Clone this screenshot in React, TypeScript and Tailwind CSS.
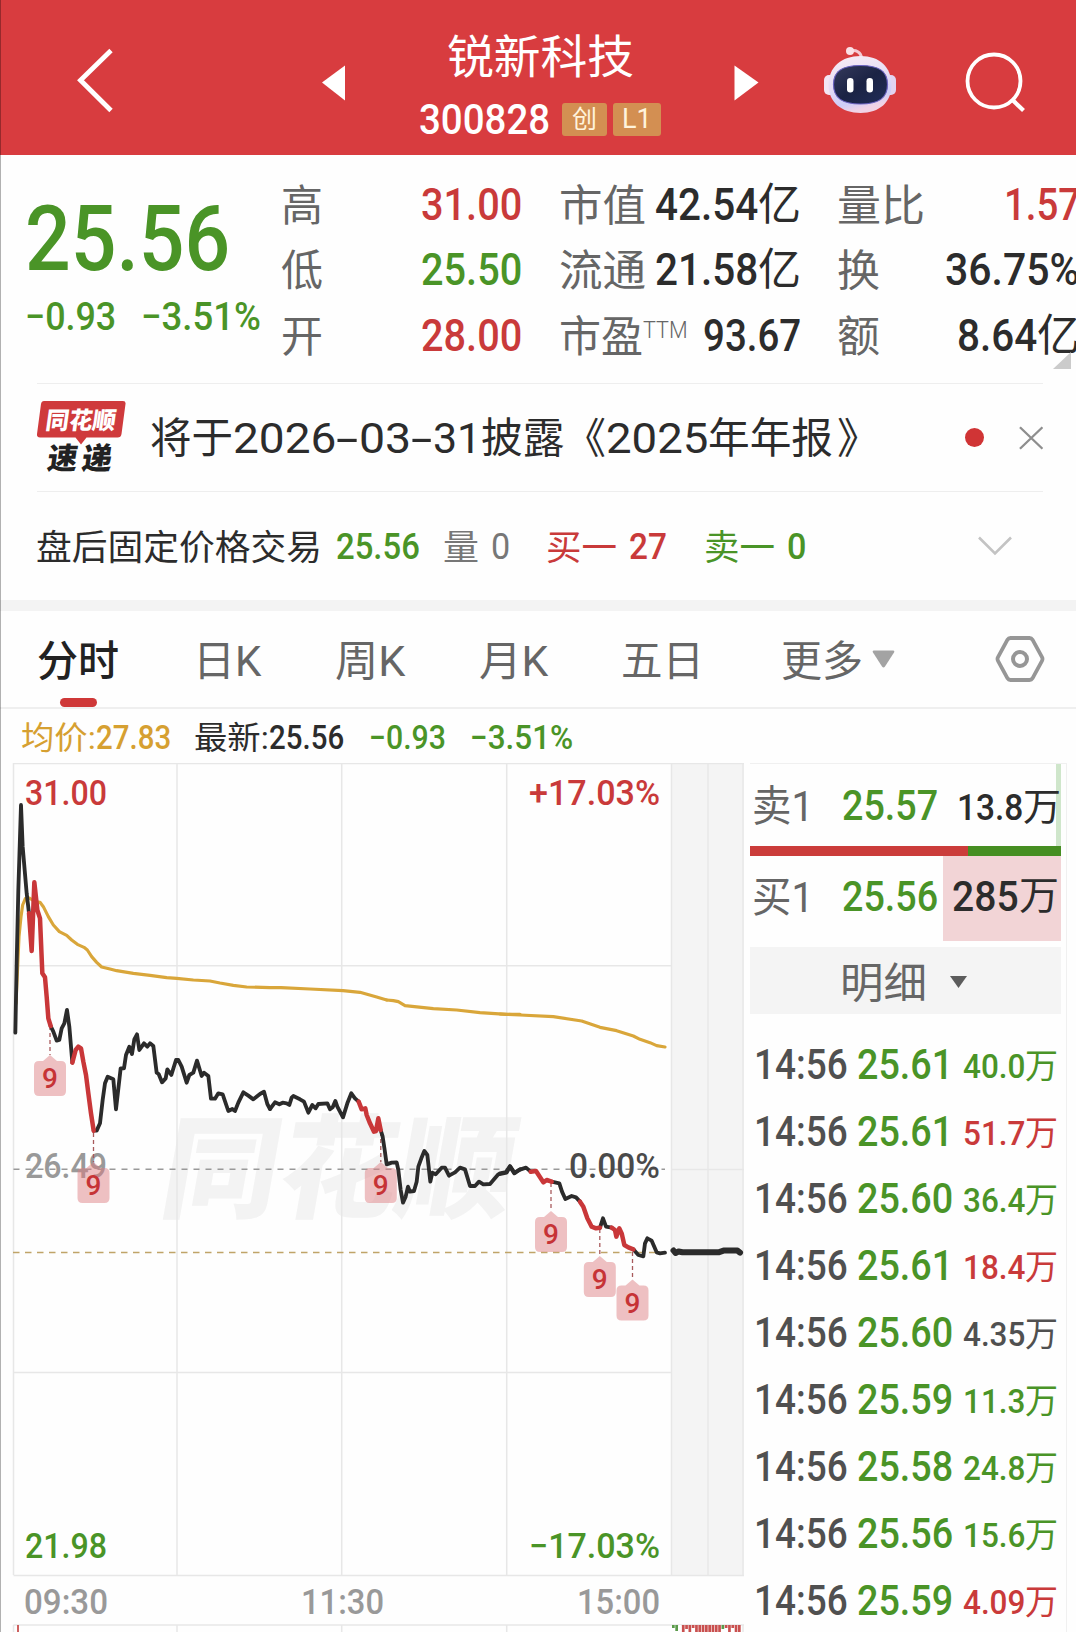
import { useLayoutEffect, useRef, type ReactNode } from "react";

const RED = "#c93a3a";
const GREEN = "#4a9427";

/** Single-line text squeezed or stretched to the width of its box. */
function Fit({ className = "", children }: { className?: string; children: ReactNode }) {
  const box = useRef<HTMLSpanElement>(null);
  const inner = useRef<HTMLSpanElement>(null);
  useLayoutEffect(() => {
    const fit = () => {
      if (!box.current || !inner.current) return;
      const natural = inner.current.offsetWidth;
      if (natural) inner.current.style.transform = `scaleX(${box.current.clientWidth / natural})`;
    };
    fit();
    document.fonts?.ready.then(fit);
  }, []);
  return (
    <span ref={box} className={`block shrink-0 leading-none ${className}`}>
      <span ref={inner} className="inline-block origin-left whitespace-nowrap align-top">
        {children}
      </span>
    </span>
  );
}

function Robot() {
  return (
    <svg className="ml-[64px] w-[74px] h-[70px] shrink-0" viewBox="823 45 74 70">
      <defs>
        <linearGradient id="shell" x1="0" y1="0" x2="0.3" y2="1">
          <stop offset="0" stopColor="#f9edf5" />
          <stop offset="0.55" stopColor="#e6dcf4" />
          <stop offset="0.85" stopColor="#cdcdf8" />
          <stop offset="1" stopColor="#f0d3e6" />
        </linearGradient>
        <linearGradient id="visor" x1="0" y1="0" x2="1" y2="1">
          <stop offset="0" stopColor="#353a5c" />
          <stop offset="0.5" stopColor="#1b2344" />
          <stop offset="1" stopColor="#202c58" />
        </linearGradient>
      </defs>
      <path d="M850 51c6-1.500 11 1 11.500 7" fill="none" stroke="#f5c9d3" strokeWidth="3" />
      <circle cx="850" cy="51" r="4" fill="#fbe0e6" />
      <rect x="824" y="75" width="12" height="20" rx="5" fill="#f3e6f4" />
      <rect x="884" y="75" width="12" height="20" rx="5" fill="#e2d3f0" />
      <path d="M860.500 56c19 0 31 11 31 29 0 17-12 28-31 28s-32-11-32-28c0-18 13-29 32-29Z" fill="url(#shell)" />
      <path
        d="M860.500 65.500c19 0 27 6 27 19s-8 19.500-27 19.500-27-6.500-27-19.500 8-19 27-19Z"
        fill="url(#visor)"
        stroke="#6a62c0"
        strokeWidth="1.200"
      />
      <rect x="847" y="78" width="6.500" height="14.500" rx="3.200" fill="#fff" />
      <rect x="866.500" y="78" width="6.500" height="14.500" rx="3.200" fill="#fff" />
    </svg>
  );
}

function Header() {
  return (
    <header className="flex h-[155px] shrink-0 bg-[#d83c3f] text-white">
      <svg className="ml-[76px] w-[40px] h-[155px] shrink-0" viewBox="76 0 40 155">
        <path d="M111 50.500 80.500 80.200 111 110.500" fill="none" stroke="#fff" strokeWidth="4.800" />
      </svg>
      <svg className="ml-[206px] w-[23px] h-[155px] shrink-0" viewBox="322 0 23 155">
        <path d="M345 65.500v35L322 82.500Z" fill="#fff" />
      </svg>
      <div className="ml-[74px] flex w-[243px] shrink-0 flex-col items-center pt-[34px]">
        <Fit className="w-[187px] text-[46px]">锐新科技</Fit>
        <div className="mt-[18px] flex h-[42px] w-full items-center">
          <Fit className="w-[131px] pt-[1px] text-[42px] font-medium">300828</Fit>
          <span className="ml-[12px] flex h-[33px] w-[45px] items-center justify-center rounded-[3px] bg-[#d38f52] text-[#fff3dc]">
            <Fit className="w-[25px] text-[25px]">创</Fit>
          </span>
          <span className="ml-[6px] flex h-[33px] w-[48px] items-center justify-center rounded-[3px] bg-[#d38f52] text-[#fff3dc]">
            <Fit className="w-[30px] text-[27px]">L1</Fit>
          </span>
        </div>
      </div>
      <svg className="ml-[72px] w-[25px] h-[155px] shrink-0" viewBox="734 0 25 155">
        <path d="M734.500 65.500v35L758.500 82.500Z" fill="#fff" />
      </svg>
      <div className="flex pt-[45px]">
        <Robot />
      </div>
      <svg className="ml-[67px] w-[62px] h-[155px] shrink-0" viewBox="964 0 62 155">
        <ellipse cx="994" cy="81" rx="26.500" ry="26.500" fill="none" stroke="#fff" strokeWidth="3.800" />
        <path d="m1011.500 99 12 11.500" stroke="#fff" strokeWidth="4.200" />
      </svg>
    </header>
  );
}

function StatRow({ children }: { children: ReactNode }) {
  return <div className="flex h-[65.5px] items-center justify-between text-[44px]">{children}</div>;
}

function Stats() {
  return (
    <section className="relative flex h-[228px] shrink-0 text-[#2c2c2c]">
      <div className="ml-[25px] w-[256px] shrink-0 pt-[39px] text-[#4a9427]">
        <Fit className="w-[205px] text-[91px] font-medium">25.56</Fit>
        <div className="mt-[13px] flex text-[39px] font-medium">
          <Fit className="w-[91px]">−0.93</Fit>
          <Fit className="ml-[25px] w-[120px]">−3.51%</Fit>
        </div>
      </div>
      <div className="w-[241px] shrink-0 pt-[17px]">
        <StatRow>
          <Fit className="w-[42px] pt-[3px] text-[43px] text-[#666]">高</Fit>
          <Fit className="w-[101px] font-medium text-[#c93a3a]">31.00</Fit>
        </StatRow>
        <StatRow>
          <Fit className="w-[42px] pt-[3px] text-[43px] text-[#666]">低</Fit>
          <Fit className="w-[101px] font-medium text-[#4a9427]">25.50</Fit>
        </StatRow>
        <StatRow>
          <Fit className="w-[42px] pt-[3px] text-[43px] text-[#666]">开</Fit>
          <Fit className="w-[101px] font-medium text-[#c93a3a]">28.00</Fit>
        </StatRow>
      </div>
      <div className="ml-[37px] w-[242px] shrink-0 pt-[17px]">
        <StatRow>
          <Fit className="w-[87px] pt-[3px] text-[43px] text-[#666]">市值</Fit>
          <div className="flex">
            <Fit className="w-[103px] font-medium">42.54</Fit>
            <Fit className="w-[43px]">亿</Fit>
          </div>
        </StatRow>
        <StatRow>
          <Fit className="w-[87px] pt-[3px] text-[43px] text-[#666]">流通</Fit>
          <div className="flex">
            <Fit className="w-[103px] font-medium">21.58</Fit>
            <Fit className="w-[43px]">亿</Fit>
          </div>
        </StatRow>
        <StatRow>
          <div className="flex text-[#666]">
            <Fit className="w-[84px] pt-[3px] text-[43px]">市盈</Fit>
            <Fit className="mt-[6px] w-[45px] text-[23px] font-light">TTM</Fit>
          </div>
          <Fit className="w-[98px] font-medium">93.67</Fit>
        </StatRow>
      </div>
      <div className="ml-[36px] w-[243px] shrink-0 pt-[17px]">
        <StatRow>
          <Fit className="w-[88px] pt-[3px] text-[43px] text-[#666]">量比</Fit>
          <Fit className="w-[76px] font-medium text-[#c93a3a]">1.57</Fit>
        </StatRow>
        <StatRow>
          <Fit className="w-[43px] pt-[3px] text-[43px] text-[#666]">换</Fit>
          <Fit className="w-[135px] font-medium">36.75%</Fit>
        </StatRow>
        <StatRow>
          <Fit className="w-[43px] pt-[3px] text-[43px] text-[#666]">额</Fit>
          <div className="flex">
            <Fit className="w-[80px] font-medium">8.64</Fit>
            <Fit className="w-[43px]">亿</Fit>
          </div>
        </StatRow>
      </div>
      <svg className="absolute top-[197px] left-[1053px] h-[17px] w-[18px]" viewBox="0 0 18 17">
        <path d="M18 0v17H0Z" fill="#cbcbcb" />
      </svg>
    </section>
  );
}

function News() {
  return (
    <section className="mr-[33px] ml-[37px] flex h-[109px] shrink-0 items-center border-t-[1.5px] border-b-[1.5px] border-[#eeeeee] text-[#2c2c2c]">
      <svg className="h-[76px] w-[90px] shrink-0" viewBox="37 399 90 76">
        <path d="M44 400h79q3 0 2.500 3l-4 30q-.5 3.500-4 3.500H86.500l-5.500 7-5.500-7H40q-3.500 0-3-3.500l4-30q.5-3 3-3Z" fill="#cf3a3c" />
        <g transform="translate(81 0) skewX(-8)" fontFamily="'Noto Sans CJK SC', sans-serif" fontWeight="900" textAnchor="middle">
          <text x="59" y="428" fontSize="24" fill="#fff" textLength="70" lengthAdjust="spacingAndGlyphs">同花顺</text>
          <text x="46" y="468.500" fontSize="30" fill="#222" textLength="30" lengthAdjust="spacingAndGlyphs">速</text>
          <text x="80.500" y="468.500" fontSize="30" fill="#222" textLength="30" lengthAdjust="spacingAndGlyphs">递</text>
        </g>
      </svg>
      <div className="ml-[23px] flex pt-[3px] text-[42px]">
        <Fit className="w-[83px]">将于</Fit>
        <Fit className="w-[103px]">2026</Fit>
        <Fit className="w-[23px]">-</Fit>
        <Fit className="w-[52px]">03</Fit>
        <Fit className="w-[22px]">-</Fit>
        <Fit className="w-[48px]">31</Fit>
        <Fit className="w-[125px]">披露《</Fit>
        <Fit className="w-[102px]">2025</Fit>
        <Fit className="w-[125px]">年年报</Fit>
        <Fit className="ml-[4px] w-[43px]">》</Fit>
      </div>
      <span className="ml-[85px] size-[19px] rounded-full bg-[#d03435]" />
      <svg className="ml-[35px] h-[24px] w-[25px]" viewBox="0 0 25 24">
        <path d="m1 1 23 22M24 1 1 23" stroke="#8e8e8e" strokeWidth="2.400" />
      </svg>
    </section>
  );
}

function AfterHours() {
  return (
    <section className="flex h-[108px] shrink-0 items-center pb-[1px] pl-[36px] text-[36px] text-[#2c2c2c]">
      <Fit className="w-[286px] pt-[5px] text-[35px]">盘后固定价格交易</Fit>
      <Fit className="ml-[14px] w-[84px] pt-[3px] font-medium text-[#4a9427]">25.56</Fit>
      <Fit className="ml-[23px] w-[36px] pt-[5px] text-[35px] text-[#777]">量</Fit>
      <Fit className="ml-[12px] w-[19px] pt-[3px] text-[#777]">0</Fit>
      <Fit className="ml-[36px] w-[71px] pt-[5px] text-[35px] text-[#c93a3a]">买一</Fit>
      <Fit className="ml-[12px] w-[38px] pt-[3px] font-medium text-[#c93a3a]">27</Fit>
      <Fit className="ml-[37px] w-[71px] pt-[5px] text-[35px] text-[#4a9427]">卖一</Fit>
      <Fit className="ml-[12px] w-[19px] pt-[3px] font-medium text-[#4a9427]">0</Fit>
      <svg className="ml-[171px] h-[20px] w-[36px]" viewBox="0 0 36 20">
        <path d="m2 1.500 16 16 16-16" fill="none" stroke="#c3c3c3" strokeWidth="2.600" />
      </svg>
    </section>
  );
}

function Tabs() {
  return (
    <nav className="relative flex h-[98px] shrink-0 items-center border-b-2 border-[#efefef] pl-[37px] text-[42px] text-[#666]">
      <Fit className="w-[82px] pt-[6px] font-medium text-[#222]">分时</Fit>
      <Fit className="ml-[74px] w-[68px] pt-[6px]">日K</Fit>
      <Fit className="ml-[74px] w-[70px] pt-[6px]">周K</Fit>
      <Fit className="ml-[74px] w-[69px] pt-[6px]">月K</Fit>
      <Fit className="ml-[73px] w-[83px] pt-[6px]">五日</Fit>
      <Fit className="ml-[77px] w-[82px] pt-[6px]">更多</Fit>
      <svg className="ml-[9px] h-[18px] w-[23px]" viewBox="0 0 23 18">
        <path d="M2 .5h19q2 0 1 2L13 16.500q-1.500 1.800-3 0L1 2.500q-1-2 1-2Z" fill="#a3a3a3" />
      </svg>
      <svg className="ml-[100px] h-[48px] w-[50px]" viewBox="0 0 50 48">
        <path d="M15.500 3h19q2 0 3 1.700l9.500 17.500q1 1.800 0 3.600L37.500 43.300q-1 1.700-3 1.700h-19q-2 0-3-1.700L3 25.800q-1-1.800 0-3.600L12.500 4.700q1-1.700 3-1.700Z" fill="none" stroke="#969696" strokeWidth="3.800" />
        <circle cx="25" cy="24" r="7" fill="none" stroke="#969696" strokeWidth="4" />
      </svg>
      <span className="absolute top-[87px] left-[60px] h-[9px] w-[37px] rounded-full bg-[#cf3838]" />
    </nav>
  );
}

function Quote() {
  return (
    <div className="flex h-[54px] shrink-0 items-center pt-[3px] pl-[21px] text-[33px] text-[#2c2c2c]">
      <Fit className="w-[75px] pt-[1px] text-[32px] text-[#d6a031]">均价:</Fit>
      <Fit className="w-[75px] font-medium text-[#d6a031]">27.83</Fit>
      <Fit className="ml-[23px] w-[75px] pt-[1px] text-[32px]">最新:</Fit>
      <Fit className="w-[75px] font-medium">25.56</Fit>
      <Fit className="ml-[25px] w-[77px] font-medium text-[#4a9427]">−0.93</Fit>
      <Fit className="ml-[24px] w-[103px] font-medium text-[#4a9427]">−3.51%</Fit>
    </div>
  );
}

/* Traces are sampled at three units per pixel, one group per part of the session. */
const traces = [
  {
    at: "translate(0 750) scale(.33333)",
    average:
      "48,760 57,560 63,500 68,465 76,446 88,444 105,455 120,457 130,470 145,500 160,525 178,545 200,556 215,570 232,583 252,592 262,600 275,620 290,637 305,651 330,657 350,662 400,670 450,676 500,683 530,685 580,690 630,693 660,699 700,706 740,711 810,713 843,713 930,717 1029,722 1080,727 1130,741 1160,750",
    price: [
      "46,848 50,640 55,420 63,165 68,290 80,430 87,490",
      "152,828 160,845 170,872 178,870 185,835 193,820 201,780 208,830 217,938",
      "281,1142 290,1142 300,1120 308,1050 315,1000 323,980 340,988 348,1078 362,955 372,955 378,915 388,890 396,912 403,868 411,853 418,900 432,880 442,890 450,880 460,888 470,968 476,972 486,997 497,985 502,958 514,975 528,930 535,930 545,950 560,998 568,975 580,968 591,932 605,978 612,968 625,978 633,1046 645,1046 655,1030 668,1033 685,1083 697,1077 705,1083 715,1058 730,1027 745,1037 760,1048 780,1032 792,1025 802,1062 810,1077",
    ],
    signal: [
      "87,490 95,603 103,397 112,480 120,505 127,670 135,682 140,740 145,805 152,828",
      "217,938 227,900 235,890 243,895 250,935 258,975 265,1030 273,1090 281,1142",
    ],
  },
  {
    at: "translate(250 1000) scale(.33333)",
    average: "410,0 430,2 445,5 465,17 550,26 620,30 690,38 770,43 810,43",
    price: [
      "60,327 75,307 88,313 98,308 110,310 118,315 125,293 130,288 150,298 162,305 175,338 187,315 197,325 205,312 232,310 240,328 248,322 256,303 262,320 279,352 292,310 304,280 315,295 326,305",
      "392,390 398,410 404,450 410,493 425,488 440,487 445,510 452,570 459,608 467,590 474,560 480,575 492,573 500,545 505,500 514,475 523,453 532,465 541,545 547,518 557,523 575,503 585,503 597,527 615,517 630,503 645,508 660,558 675,558 687,545 700,553 720,552 745,523 770,518 780,500 793,520 810,508",
    ],
    signal: ["326,305 335,328 346,325 350,345 360,370 372,395 378,393 385,355 392,390"],
  },
  {
    at: "translate(500 1000) scale(.33333)",
    average: "0,42 60,45 160,50 245,63 300,82 350,92 400,108 420,118 450,128 470,137 495,141",
    price: [
      "0,520 18,516 30,498 43,518 60,509 78,503 92,515",
      "155,545 178,550 186,575 196,597 215,588 228,592 240,605",
      "300,683 309,655 318,680 335,683",
      "400,748 415,765 430,769 435,730 442,715 455,722 470,757 480,760 495,758",
    ],
    signal: [
      "92,515 108,513 130,547 140,540 155,545",
      "240,605 250,620 262,655 275,680 288,685 300,683",
      "335,683 345,690 349,710 358,685 365,700 373,735 385,742 400,748",
    ],
  },
];

const markers = [
  { x: 50, from: 1026, peak: 1055 },
  { x: 93.5, from: 1133, peak: 1162 },
  { x: 380.8, from: 1132, peak: 1162 },
  { x: 551, from: 1183, peak: 1211 },
  { x: 599.8, from: 1229, peak: 1256 },
  { x: 632.5, from: 1252, peak: 1279.5 },
];

const labels = [
  { x: 25, y: 805, w: 82, text: "31.00", color: RED },
  { x: 529, y: 805, w: 131, text: "+17.03%", color: RED },
  { x: 25, y: 1177.5, w: 82, text: "26.49", color: "#999" },
  { x: 569, y: 1177.5, w: 91, text: "0.00%", color: "#4a4a4a" },
  { x: 25, y: 1558, w: 82, text: "21.98", color: GREEN },
  { x: 529, y: 1558, w: 131, text: "−17.03%", color: GREEN },
  { x: 24, y: 1613.5, w: 84, text: "09:30", color: "#999" },
  { x: 301, y: 1613.5, w: 83, text: "11:30", color: "#999" },
  { x: 577, y: 1613.5, w: 83, text: "15:00", color: "#999" },
];

const volume = [
  ["#5a9a4a", 3], ["#5a9a4a", 6], ["#ffffff", 2], ["#c9504f", 7], ["#c9504f", 4], ["#c9504f", 7], ["#c9504f", 3],
  ["#c9504f", 7], ["#c9504f", 7], ["#c9504f", 7], ["#c9504f", 7], ["#c9504f", 7], ["#c9504f", 7], ["#c9504f", 7],
  ["#c9504f", 7], ["#5a9a4a", 4], ["#c9504f", 3], ["#c9504f", 7], ["#c9504f", 3], ["#c9504f", 7], ["#c9504f", 7],
] as const;

function Chart() {
  return (
    <svg className="h-[869px] w-[744px] shrink-0" viewBox="0 763 744 869">
      <rect x="671" y="763" width="73" height="812.500" fill="#f4f4f4" />
      <text
        transform="translate(160 0) skewX(-10)"
        x="210"
        y="1209"
        fontFamily="'Noto Sans CJK SC', sans-serif"
        fontWeight="900"
        fontSize="112"
        fill="#f3f3f3"
        textLength="352"
        lengthAdjust="spacingAndGlyphs"
      >
        同花顺
      </text>
      <g stroke="#e7e7e7" strokeWidth="1.500" fill="none">
        <path d="M13.500 763.500H744M13.500 965.700H671M13.500 1372.500H671M13.500 1575.500H744M671 1169.500H744M13.500 1625H744" />
        <path d="M13.500 763V1575M177 763V1575M341.700 763V1575M506.700 763V1575M671.500 763V1575M708 763V1575M743 763V1575" />
        <path d="M13.500 1625v7M177 1625v7M341.700 1625v7M506.700 1625v7M743 1625v7" />
      </g>
      <path d="M13.500 1169.300H665" stroke="#999" strokeWidth="1.500" strokeDasharray="6 6" />
      <path d="M13 1252.500H665" stroke="#c0a468" strokeWidth="1.600" strokeDasharray="6.500 5.500" />
      {labels.map((l) => (
        <text
          key={l.text}
          x={l.x}
          y={l.y}
          fill={l.color}
          fontSize="34.500"
          fontWeight="500"
          fontFamily="Roboto, sans-serif"
          textLength={l.w}
          lengthAdjust="spacingAndGlyphs"
        >
          {l.text}
        </text>
      ))}
      {markers.map((m) => (
        <g key={m.x}>
          <path d={`M${m.x} ${m.from}V${m.peak}`} stroke="#a85a5c" strokeWidth="1.300" strokeDasharray="4 3" />
          <path
            transform={`translate(${m.x} ${m.peak})`}
            d="M0 0 7 6H11q5 0 5 5V36q0 5-5 5H-11q-5 0-5-5V11q0-5 5-5h4Z"
            fill="#dd7c80"
            fillOpacity=".47"
          />
          <text x={m.x} y={m.peak + 33} textAnchor="middle" fontFamily="Roboto, sans-serif" fontWeight="500" fontSize="28" fill="#c63336">
            9
          </text>
        </g>
      ))}
      {traces.map((t) => (
        <g key={t.at} transform={t.at} fill="none" strokeLinejoin="round" strokeLinecap="round">
          <polyline points={t.average} stroke="#d9a63a" strokeWidth="9.500" />
          {t.price.map((p) => (
            <polyline key={p} points={p} stroke="#2b2b2b" strokeWidth="11.500" />
          ))}
          {t.signal.map((p) => (
            <polyline key={p} points={p} stroke="#c93739" strokeWidth="13.500" />
          ))}
        </g>
      ))}
      <path
        d="M673.500 1250.500l2 2.500 3-1.500 4 .8h36l5-1.700h14l2.500 2"
        fill="none"
        stroke="#2b2b2b"
        strokeWidth="6"
        strokeLinejoin="round"
        strokeLinecap="round"
      />
      <path d="M18 1625v7" stroke="#c9504f" strokeWidth="1.800" />
      {volume.map(([color, h], i) => (
        <rect key={i} x={672 + i * 3.300} y="1625" width="2.700" height={h} fill={color} />
      ))}
    </svg>
  );
}

const trades = [
  { price: "25.61", amount: "40.0", tone: "text-[#4a9427]" },
  { price: "25.61", amount: "51.7", tone: "text-[#c93a3a]" },
  { price: "25.60", amount: "36.4", tone: "text-[#4a9427]" },
  { price: "25.61", amount: "18.4", tone: "text-[#c93a3a]" },
  { price: "25.60", amount: "4.35", tone: "text-[#505050]" },
  { price: "25.59", amount: "11.3", tone: "text-[#4a9427]" },
  { price: "25.58", amount: "24.8", tone: "text-[#4a9427]" },
  { price: "25.56", amount: "15.6", tone: "text-[#4a9427]" },
  { price: "25.59", amount: "4.09", tone: "text-[#c93a3a]" },
];

function OrderBook() {
  return (
    <aside className="ml-[6px] w-[317px] shrink-0 border-t border-r border-[#f0f0f0] text-[42px] text-[#2c2c2c]">
      <div className="w-[311px]">
        <div className="flex h-[82px] items-center border-r-[5px] border-[#cfe6cb] pt-[2px]">
          <Fit className="ml-[2px] w-[62px] pt-[2px] text-[#666]">卖1</Fit>
          <Fit className="ml-[28px] w-[96px] font-medium text-[#4a9427]">25.57</Fit>
          <Fit className="ml-[19px] w-[66px] pt-[2px] text-[37px] font-medium">13.8</Fit>
          <Fit className="w-[38px] pt-[2px] text-[38px]">万</Fit>
        </div>
        <div className="flex h-[10px]">
          <div className="w-[218px] bg-[#cb3c3a]" />
          <div className="grow bg-[#468e22]" />
        </div>
        <div className="flex h-[85px] items-center pb-[4px]">
          <Fit className="ml-[2px] w-[62px] pt-[2px] text-[#666]">买1</Fit>
          <Fit className="ml-[28px] w-[96px] font-medium text-[#4a9427]">25.56</Fit>
          <div className="-mb-[4px] ml-[5px] flex h-[85px] w-[118px] items-center bg-[#f2d4d6] pb-[4px] pl-[9px]">
            <Fit className="w-[67px] font-medium">285</Fit>
            <Fit className="w-[40px] text-[39px]">万</Fit>
          </div>
        </div>
        <div className="mt-[6px] flex h-[67px] items-center bg-[#f4f4f4] pt-[3px] text-[#666]">
          <Fit className="ml-[90px] w-[87px] pt-[4px] text-[42px]">明细</Fit>
          <svg className="ml-[23px] h-[12px] w-[17px]" viewBox="0 0 17 12">
            <path d="M0 0h17L8.500 12Z" fill="#5c5c5c" />
          </svg>
        </div>
        <div className="mt-[17px]">
          {trades.map((t, i) => (
            <div key={i} className="flex h-[67px] items-center">
              <Fit className="ml-[4px] w-[94px] font-medium text-[#505050]">14:56</Fit>
              <Fit className="ml-[9px] w-[96px] font-medium text-[#4a9427]">{t.price}</Fit>
              <Fit className={`ml-[10px] w-[62px] pt-[2px] text-[34px] font-medium ${t.tone}`}>{t.amount}</Fit>
              <Fit className={`w-[33px] pt-[2px] text-[34px] ${t.tone}`}>万</Fit>
            </div>
          ))}
        </div>
      </div>
    </aside>
  );
}

export default function App() {
  return (
    <div className="relative flex h-[1632px] w-[1076px] flex-col overflow-hidden bg-[#fefefe] font-['Roboto','Noto_Sans_CJK_SC',sans-serif]">
      <Header />
      <Stats />
      <News />
      <AfterHours />
      <div className="h-[11px] shrink-0 bg-[#f3f3f3]" />
      <Tabs />
      <Quote />
      <div className="flex h-[869px] shrink-0">
        <Chart />
        <OrderBook />
      </div>
      <span className="absolute inset-y-0 left-0 w-px bg-black/30" />
    </div>
  );
}
